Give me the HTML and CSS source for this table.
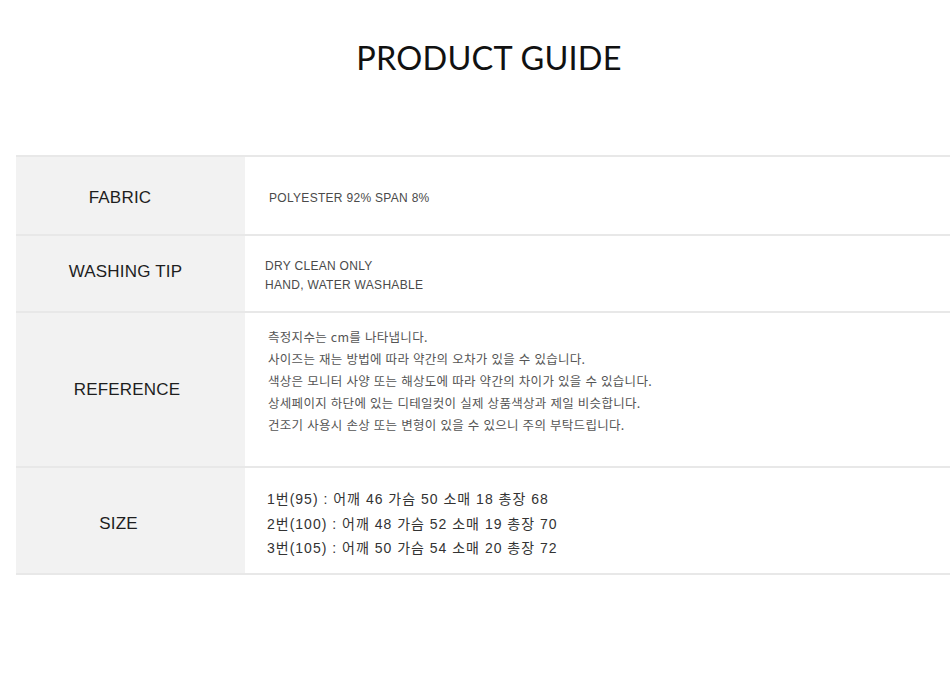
FILE: index.html
```html
<!DOCTYPE html>
<html lang="ko">
<head>
<meta charset="utf-8">
<title>Product Guide</title>
<link rel="stylesheet" href="styles.css">
</head>
<body>
<div class="page">
  <h1 class="title">PRODUCT GUIDE</h1>
  <div class="guide">
    <div class="row row-fabric">
      <div class="label label-fabric">FABRIC</div>
      <div class="value caps fabric">POLYESTER 92% SPAN 8%</div>
    </div>
    <div class="row row-wash">
      <div class="label label-wash">WASHING TIP</div>
      <div class="value caps wash">DRY CLEAN ONLY<br>HAND, WATER WASHABLE</div>
    </div>
    <div class="row row-ref">
      <div class="label label-ref">REFERENCE</div>
      <div class="value ref">
        <p>측정지수는 cm를 나타냅니다.</p>
        <p>사이즈는 재는 방법에 따라 약간의 오차가 있을 수 있습니다.</p>
        <p>색상은 모니터 사양 또는 해상도에 따라 약간의 차이가 있을 수 있습니다.</p>
        <p>상세페이지 하단에 있는 디테일컷이 실제 상품색상과 제일 비슷합니다.</p>
        <p>건조기 사용시 손상 또는 변형이 있을 수 있으니 주의 부탁드립니다.</p>
      </div>
    </div>
    <div class="row row-size">
      <div class="label label-size">SIZE</div>
      <div class="value size">
        <p>1번(95) : 어깨 46 가슴 50 소매 18 총장 68</p>
        <p>2번(100) : 어깨 48 가슴 52 소매 19 총장 70</p>
        <p>3번(105) : 어깨 50 가슴 54 소매 20 총장 72</p>
      </div>
    </div>
  </div>
</div>
</body>
</html>
```

FILE: styles.css
```css
html, body {
  margin: 0;
  padding: 0;
  background: #ffffff;
  overflow: hidden;
}
.page {
  width: 946px;
  margin-left: 16px;
  font-family: "Liberation Sans", Arial, "Noto Sans CJK KR", sans-serif;
}
.title {
  margin: 0;
  height: 155px;
  padding-top: 37px;
  box-sizing: border-box;
  text-align: center;
  font-family: Lato, "Open Sans", sans-serif;
  font-weight: 400;
  font-size: 32.5px;
  line-height: 42px;
  color: #111;
  letter-spacing: 0.2px;
}
.guide {
  border-bottom: 2px solid #e8e8e8;
}
.row {
  display: grid;
  grid-template-columns: 229px 1fr;
  border-top: 2px solid #e8e8e8;
}
.row-fabric { height: 77px; }
.row-wash { height: 75px; }
.row-ref { height: 153px; }
.row-size { height: 105px; }
.label {
  background: #f2f2f2;
  display: flex;
  align-items: center;
  justify-content: center;
  font-size: 17px;
  color: #1e1e1e;
  letter-spacing: 0.2px;
}
.label-fabric { padding: 4px 21px 0 0; }
.label-wash { padding: 0 10px 4px 0; }
.label-ref { padding: 0 7px 0 0; }
.label-size { padding: 6px 24px 0 0; }
.value {
  display: flex;
  flex-direction: column;
  justify-content: center;
  color: #4a4a4a;
}
.value p { margin: 0; }
.caps {
  font-size: 12px;
  letter-spacing: 0.3px;
}
.fabric {
  padding-left: 24px;
  padding-top: 4px;
}
.wash {
  padding-left: 20px;
  padding-top: 4px;
  line-height: 19px;
}
.ref {
  padding-left: 23px;
  font-size: 12.5px;
  letter-spacing: 0.3px;
  line-height: 22px;
  color: #555;
  justify-content: flex-start;
  padding-top: 13px;
  font-family: "Noto Sans CJK KR", sans-serif;
}
.size {
  padding-left: 22px;
  font-size: 14px;
  letter-spacing: 1px;
  line-height: 24.5px;
  color: #333;
  padding-top: 7px;
  font-family: "Liberation Sans", "Noto Sans CJK KR", sans-serif;
}
```
